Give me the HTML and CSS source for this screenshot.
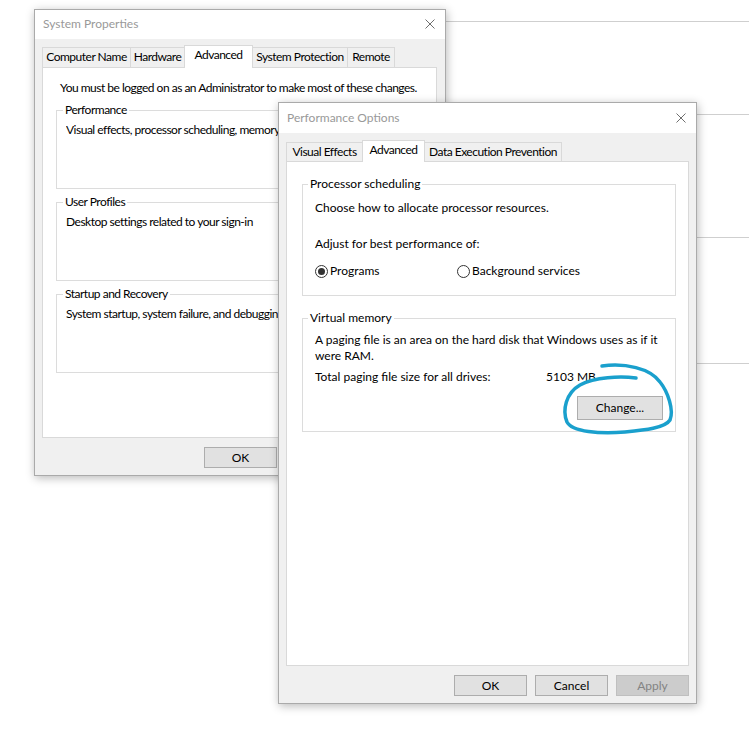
FILE: index.html
```html
<!DOCTYPE html>
<html lang="en">
<head>
<meta charset="utf-8">
<title>System Properties</title>
<link rel="stylesheet" href="styles.css">
</head>
<body>
<div class="desktop">
  <div class="bgline bl1"></div>
  <div class="bgline bl2"></div>
  <div class="bgline bl3"></div>
  <div class="bgline bl4"></div>

  <div class="window win-sys">
    <div class="titlebar">
      <span class="title">System Properties</span>
      <svg class="close" viewBox="0 0 10 10"><path d="M0.5 0.5 L9.5 9.5 M9.5 0.5 L0.5 9.5"/></svg>
    </div>
    <div class="body">
      <div class="tabs">
        <div class="tab t-cn">Computer Name</div>
        <div class="tab t-hw">Hardware</div>
        <div class="tab t-adv active">Advanced</div>
        <div class="tab t-sp">System Protection</div>
        <div class="tab t-rm">Remote</div>
      </div>
      <div class="panel sys-panel">
        <div class="note">You must be logged on as an Administrator to make most of these changes.</div>
        <div class="group sys-group">
          <div class="legend">Performance</div>
          <div class="gtext">Visual effects, processor scheduling, memory usage, and virtual memory</div>
        </div>
        <div class="group sys-group">
          <div class="legend">User Profiles</div>
          <div class="gtext">Desktop settings related to your sign-in</div>
        </div>
        <div class="group sys-group">
          <div class="legend">Startup and Recovery</div>
          <div class="gtext">System startup, system failure, and debugging information</div>
        </div>
      </div>
      <div class="buttons sys-buttons">
        <div class="btn">OK</div>
        <div class="btn">Cancel</div>
        <div class="btn disabled">Apply</div>
      </div>
    </div>
  </div>

  <div class="window win-perf">
    <div class="titlebar">
      <span class="title">Performance Options</span>
      <svg class="close" viewBox="0 0 10 10"><path d="M0.5 0.5 L9.5 9.5 M9.5 0.5 L0.5 9.5"/></svg>
    </div>
    <div class="body">
      <div class="tabs perf-tabs">
        <div class="tab t-ve">Visual Effects</div>
        <div class="tab t-padv active">Advanced</div>
        <div class="tab t-dep">Data Execution Prevention</div>
      </div>
      <div class="panel perf-panel">
        <div class="group proc-group">
          <div class="legend">Processor scheduling</div>
          <div class="line l-choose">Choose how to allocate processor resources.</div>
          <div class="line l-adjust">Adjust for best performance of:</div>
          <div class="radios">
            <div class="radio radio-first"><span class="circle"><span class="dot"></span></span><span>Programs</span></div>
            <div class="radio"><span class="circle"></span><span>Background services</span></div>
          </div>
        </div>
        <div class="group vm-group">
          <div class="legend">Virtual memory</div>
          <div class="line l-paging">A paging file is an area on the hard disk that Windows uses as if it<br>were RAM.</div>
          <div class="line vm-total"><span class="vm-total-label">Total paging file size for all drives:</span><span>5103 MB</span></div>
          <div class="vm-actions"><div class="btn btn-change">Change...</div></div>
        </div>
      </div>
      <div class="buttons">
        <div class="btn">OK</div>
        <div class="btn">Cancel</div>
        <div class="btn disabled">Apply</div>
      </div>
    </div>
  </div>

  <svg class="ink" viewBox="0 0 749 731" width="749" height="731">
    <path d="M636 378 C620 376 595 377 580 385 C566 393 562 410 567 422 C572 432 600 434 625 432 C645 430 665 428 670 420 C674 410 668 392 660 382 C650 368 625 363 602 366"/>
  </svg>
</div>
</body>
</html>
```

FILE: styles.css
```css
* { box-sizing: border-box; }
html, body { margin: 0; padding: 0; }
body {
  background: #fff;
  font-family: Lato, "Noto Sans", sans-serif;
  font-size: 12px;
  color: #000;
}
.desktop {
  position: relative;
  width: 749px;
  height: 731px;
  overflow: hidden;
  background: #fff;
}
.bgline { position: absolute; right: 0; height: 1px; background: #cfcfcf; }
.bl1 { top: 21px; left: 440px; }
.bl2 { top: 114px; left: 690px; }
.bl3 { top: 237px; left: 690px; }
.bl4 { top: 363px; left: 690px; }

.window {
  position: absolute;
  display: flex;
  flex-direction: column;
  background: #f0f0f0;
  border: 1px solid #aaaaaa;
  box-shadow: 1px 2px 9px rgba(0, 0, 0, 0.28);
}
.win-sys { left: 34px; top: 9px; width: 412px; height: 467px; z-index: 1; }
.win-perf { left: 278px; top: 102px; width: 419px; height: 602px; z-index: 2; }

.titlebar {
  flex: none;
  height: 30px;
  background: #fff;
  display: flex;
  align-items: center;
  justify-content: space-between;
  padding: 0 10px 0 8px;
  color: #999;
  line-height: 16px;
}
.win-sys .titlebar { height: 29px; padding-bottom: 1px; }
.close { width: 10px; height: 10px; }
.close path { stroke: #6e6e6e; stroke-width: 1; fill: none; }

.body {
  flex: 1;
  display: flex;
  flex-direction: column;
  padding: 8px 8px 7px 7px;
}
.win-perf .body { padding: 9px 7px 7px 7px; }

.tabs {
  flex: none;
  height: 20px;
  display: flex;
  align-items: flex-end;
  position: relative;
  z-index: 2;
}
.perf-tabs { height: 19px; }
.tab {
  height: 20px;
  border: 1px solid #d9d9d9;
  border-bottom: none;
  background: #f0f0f0;
  padding-top: 1px;
  line-height: 16px;
  text-align: center;
  white-space: nowrap;
  letter-spacing: -0.5px;
}
.perf-tabs .tab { height: 19px; }
.tab + .tab { margin-left: -1px; }
.tab.active {
  position: relative;
  z-index: 1;
  background: #fff;
  height: 23px;
  margin-bottom: -1px;
}
.perf-tabs .tab.active { height: 22px; }
.t-cn { width: 89px; }
.t-hw { width: 55px; }
.t-adv { width: 69px; }
.t-sp { width: 96px; }
.t-rm { width: 48px; }
.t-ve { width: 77px; }
.t-padv { width: 63px; }
.t-dep { width: 138px; }

.panel {
  flex: 1;
  background: #fff;
  border: 1px solid #d9d9d9;
  position: relative;
  z-index: 1;
}
.sys-panel { padding: 12px 13px 0 13px; letter-spacing: -0.5px; }
.perf-panel { padding: 22px 12px 0 15px; }

.note { line-height: 16px; padding-left: 4px; white-space: nowrap; }

.group {
  border: 1px solid #dcdcdc;
  line-height: 16px;
}
.legend {
  display: table;
  margin-top: -9px;
  padding: 0 2px;
  background: #fff;
  line-height: 16px;
  white-space: nowrap;
}
.sys-group {
  height: 79px;
  margin-top: 14px;
  padding: 0 9px;
}
.sys-group + .sys-group { margin-top: 13px; }
.sys-group .legend { margin-left: -3px; }
.gtext { margin-top: 4px; white-space: nowrap; overflow: hidden; }

.proc-group, .vm-group { padding: 0 12px 0 12px; }
.proc-group .legend, .vm-group .legend { margin-left: -7px; }
.proc-group { padding-bottom: 16px; }
.vm-group { margin-top: 22px; padding-bottom: 11px; }
.line { white-space: nowrap; }
.l-choose { margin-top: 8px; }
.l-adjust { margin-top: 20px; }
.l-paging { margin-top: 6px; }
.vm-total { margin-top: 5px; display: flex; }
.vm-total-label { width: 231px; }

.radios { display: flex; margin-top: 11px; height: 16px; align-items: center; }
.radio { display: flex; align-items: center; gap: 2px; white-space: nowrap; }
.radio-first { width: 142px; }
.circle {
  width: 13px;
  height: 13px;
  border: 1px solid #333;
  border-radius: 50%;
  background: #fff;
  display: flex;
  align-items: center;
  justify-content: center;
}
.dot { width: 7px; height: 7px; border-radius: 50%; background: #333; }

.vm-actions { display: flex; justify-content: flex-end; margin-top: 11px; }

.buttons {
  flex: none;
  display: flex;
  justify-content: flex-end;
  gap: 8px;
  margin-top: 9px;
}
.sys-buttons { margin-right: -2px; }
.btn {
  width: 73px;
  height: 21px;
  background: #e1e1e1;
  border: 1px solid #adadad;
  text-align: center;
  line-height: 19px;
  white-space: nowrap;
}
.btn.disabled { background: #cccccc; border-color: #bfbfbf; color: #838383; }
.btn-change { width: 86px; height: 24px; line-height: 22px; }

.ink {
  position: absolute;
  left: 0;
  top: 0;
  z-index: 5;
  pointer-events: none;
}
.ink path {
  fill: none;
  stroke: #1aa0cd;
  stroke-width: 3.5;
  stroke-linecap: round;
  stroke-linejoin: round;
}
```
